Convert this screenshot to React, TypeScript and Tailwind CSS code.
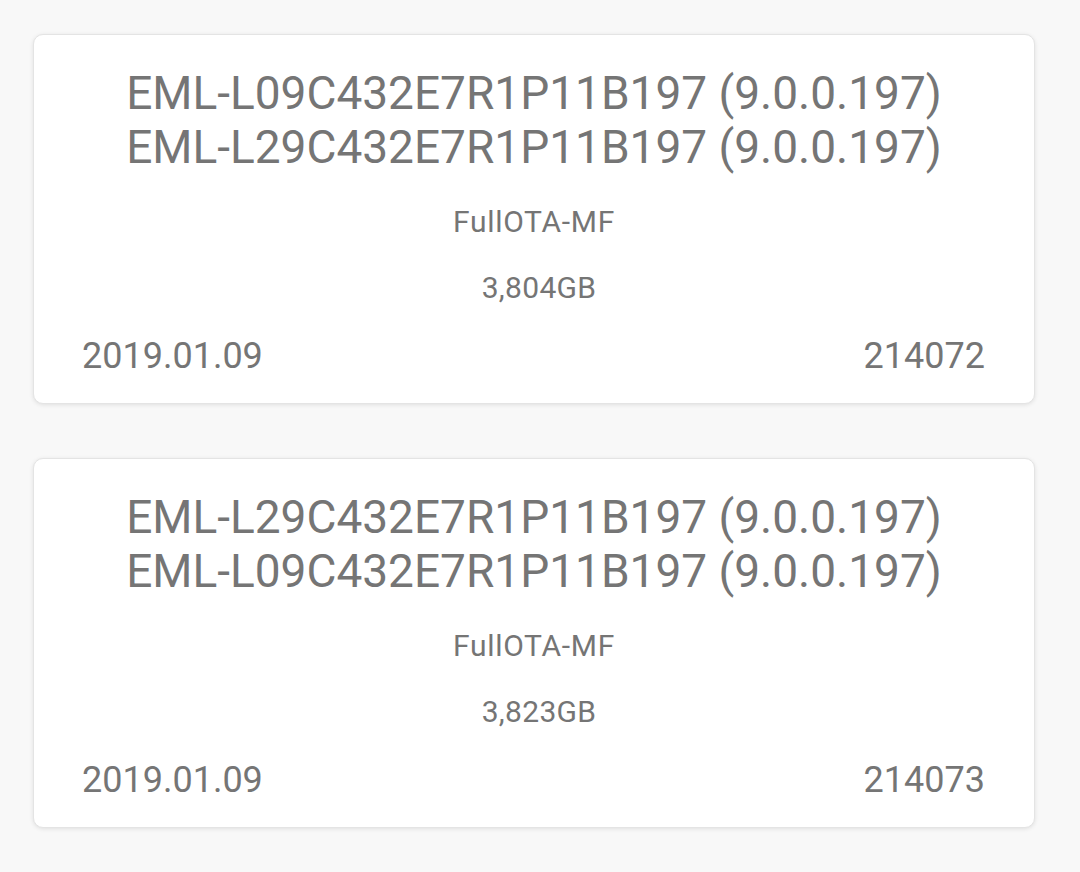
import React from "react";

type Item = { a: string; b: string; type: string; size: string; date: string; id: string };

const items: Item[] = [
  {
    a: "EML-L09C432E7R1P11B197 (9.0.0.197)",
    b: "EML-L29C432E7R1P11B197 (9.0.0.197)",
    type: "FullOTA-MF",
    size: "3,804GB",
    date: "2019.01.09",
    id: "214072",
  },
  {
    a: "EML-L29C432E7R1P11B197 (9.0.0.197)",
    b: "EML-L09C432E7R1P11B197 (9.0.0.197)",
    type: "FullOTA-MF",
    size: "3,823GB",
    date: "2019.01.09",
    id: "214073",
  },
];

function Card({ it }: { it: Item }) {
  return (
    <div className="h-[370px] rounded-[10px] bg-white border border-[#e4e4e4] shadow-[0_1px_4px_rgba(0,0,0,0.10)] flex flex-col items-center text-[#757575]">
      <div className="mt-[31px] text-[46px] leading-[54px] text-center whitespace-nowrap">
        <div>{it.a}</div>
        <div>{it.b}</div>
      </div>
      <div className="mt-[30px] text-[30px] leading-[36px] tracking-[0.7px]">{it.type}</div>
      <div className="mt-[30px] ml-[10px] text-[30px] leading-[36px] tracking-[0.3px]">{it.size}</div>
      <div className="mt-[28px] w-full flex justify-between pl-[48px] pr-[49px] text-[36px] leading-[44px]">
        <span>{it.date}</span>
        <span>{it.id}</span>
      </div>
    </div>
  );
}

export default function App() {
  return (
    <div
      className="w-[1080px] h-[872px] bg-[#f8f8f8] pt-[34px] pl-[33px] pr-[45px] flex flex-col gap-[54px]"
      style={{ fontFamily: "Roboto, 'Noto Sans', sans-serif" }}
    >
      {items.map((it, i) => (
        <Card key={i} it={it} />
      ))}
    </div>
  );
}
